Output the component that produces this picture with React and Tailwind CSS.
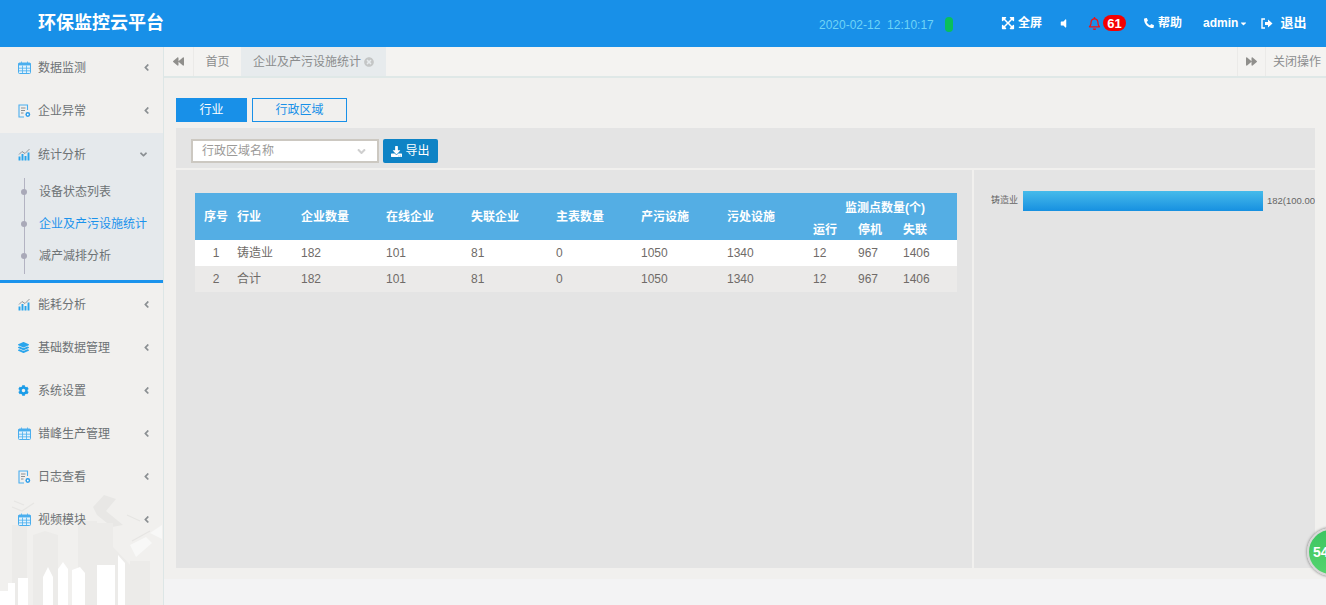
import React from 'react';
import {
  FaAngleLeft, FaAngleDown, FaBackward, FaForward, FaTimesCircle, FaExpandArrowsAlt,
  FaVolumeOff, FaRegBell, FaPhoneAlt, FaCaretDown, FaDownload, FaLayerGroup, FaCog,
} from 'react-icons/fa';

const font = { fontFamily: '"Liberation Sans", "Noto Sans CJK SC", sans-serif' };

const CalendarIcon = () => (
  <svg width="13" height="13" viewBox="0 0 13 13" fill="none">
    <rect x="0.5" y="2" width="12" height="10.5" rx="1" fill="#e3f2fc" stroke="#4aaeee" />
    <rect x="0.5" y="2" width="12" height="2.4" fill="#4aaeee" />
    <path d="M3.5 0.5V3M9.5 0.5V3M0.5 7.2H12.5M0.5 9.8H12.5M4.5 4.6V12.5M8.5 4.6V12.5" stroke="#4aaeee" strokeWidth="0.8" />
  </svg>
);

const FileIcon = () => (
  <svg width="13" height="14" viewBox="0 0 13 14" fill="none">
    <path d="M9.5 6V1H1V13H6" stroke="#4aaeee" strokeWidth="1.1" />
    <path d="M3 4H7.5M3 6.5H7M3 9H5.5" stroke="#8a8f92" strokeWidth="1" />
    <circle cx="9.8" cy="10.5" r="2.4" fill="#2a9be8" />
    <circle cx="9.8" cy="10.5" r="0.9" fill="#fff" />
  </svg>
);

const ChartIcon = () => (
  <svg width="13" height="13" viewBox="0 0 13 13" fill="none">
    <path d="M1 6.5L4 3.5L7 5.5L11.5 1" stroke="#8a8f92" strokeWidth="0.9" />
    <path d="M1.5 12.5V8.5M4.5 12.5V6M7.5 12.5V8M10.5 12.5V4.5" stroke="#2aa5ec" strokeWidth="1.9" />
  </svg>
);

const LayersIcon = () => <FaLayerGroup size={11} color="#2aa5ec" />;
const GearIcon = () => <FaCog size={11} color="#1b9ce8" />;

const ExitIcon = () => (
  <svg width="12" height="11" viewBox="0 0 12 11" fill="none">
    <path d="M4 1H1V10H4" stroke="#fff" strokeWidth="1.4" />
    <path d="M4 4H7V1.5L11.5 5.5L7 9.5V7H4Z" fill="#fff" />
  </svg>
);

const MenuItem = ({ icon, label, open }) => (
  <div className="flex items-center h-[43px] pl-[18px] pr-[11px] text-[12px] text-[#6d7275]">
    <span className="w-[20px] flex items-center shrink-0">{icon}</span>
    <span className="flex-1">{label}</span>
    {open ? <FaAngleDown size={11} color="#8a8f92" className="-ml-[3px] mr-[3px]" /> : <FaAngleLeft size={11} color="#8a8f92" />}
  </div>
);

const SubItem = ({ label, active }) => (
  <div className={`relative flex items-center h-[32px] pl-[39px] text-[12px] ${active ? 'text-[#1b93ec]' : 'text-[#6d7275]'}`}>
    <span className="absolute left-[21px] top-[13px] w-[6px] h-[6px] rounded-full bg-[#a9a9b8]" />
    {label}
  </div>
);

// skyline behind the lower menu entries
const CityBackground = () => (
  <svg className="absolute left-0 bottom-0" width="163" height="110" viewBox="0 0 163 110">
    <path d="M12 110V30H27V110ZM33 110V40L45 36L58 40V110ZM78 110V26H97V110Z" fill="#ecebe9" />
    <path d="M93 12L104 0L116 4L106 16L123 30L112 32L97 20Z" fill="#e8e7e5" />
    <path d="M97 28H113V110H97ZM113 52L132 72V110H113ZM130 66H150V110H130Z" fill="#ecebe9" />
    <path d="M12 12L22 16L34 8M14 6L24 10M127 20L140 26M132 46L150 36" stroke="#e6e5e3" strokeWidth="1.2" fill="none" />
    <path d="M130 50L146 42L152 48L136 62ZM150 38L162 30V44Z" fill="#f8f8f7" />
    <path d="M0 110V96H8V88H15V110ZM18 110V83H28V110ZM43 110V82L48 72L53 82V110ZM58 110V74L63 67L68 74V110ZM72 110V75L80 72L85 78V110ZM97 110V70H115V110ZM118 110V60L125 68V110Z" fill="#ffffff" />
  </svg>
);

const Sidebar = () => (
  <aside className="relative w-[164px] h-full bg-[#f1f0ee] border-r border-[#dde6e6] shrink-0 overflow-hidden">
    <CityBackground />
    <div className="relative -mt-px">
      <MenuItem icon={<CalendarIcon />} label="数据监测" />
      <MenuItem icon={<FileIcon />} label="企业异常" />
      <div className="mt-px bg-[#e5e9ec] border-b-[3px] border-[#1b93ec] pb-[8px]">
        <MenuItem icon={<ChartIcon />} label="统计分析" open />
        <div className="relative">
          <span className="absolute left-[23.5px] top-[2px] -bottom-[2px] w-px bg-[#b3b3c2]" />
          <SubItem label="设备状态列表" />
          <SubItem label="企业及产污设施统计" active />
          <SubItem label="减产减排分析" />
        </div>
      </div>
      <MenuItem icon={<ChartIcon />} label="能耗分析" />
      <MenuItem icon={<LayersIcon />} label="基础数据管理" />
      <MenuItem icon={<GearIcon />} label="系统设置" />
      <MenuItem icon={<CalendarIcon />} label="错峰生产管理" />
      <MenuItem icon={<FileIcon />} label="日志查看" />
      <MenuItem icon={<CalendarIcon />} label="视频模块" />
    </div>
  </aside>
);

const Header = () => (
  <header className="h-[47px] bg-[#1890e8] flex items-center text-white shrink-0">
    <div className="w-[819px] pl-[38px] text-[18px] font-bold">环保监控云平台</div>
    <span className="text-[12px] text-[#6fd4f7] w-[126px] pt-[2px] whitespace-pre">2020-02-12  12:10:17</span>
    <span className="w-[8px] h-[15px] mt-[2px] rounded-full bg-[#0abf5b]" />
    <div className="flex items-center h-full ml-[48px] pb-[1px] text-[12px] font-bold">
      <FaExpandArrowsAlt size={14} />
      <span className="ml-[3px]">全屏</span>
      <FaVolumeOff size={11} className="ml-[16px]" />
      <FaRegBell size={13} color="#f50f0f" className="ml-[19px]" />
      <span className="ml-[2px] w-[23px] h-[16px] rounded-full bg-[#f50000] flex items-center justify-center text-[13px] leading-none">61</span>
      <FaPhoneAlt size={10} className="ml-[18px]" />
      <span className="ml-[4px]">帮助</span>
      <span className="ml-[21px]">admin</span>
      <FaCaretDown size={9} className="ml-[1px]" />
      <span className="ml-[13px] flex"><ExitIcon /></span>
      <span className="ml-[7px] text-[13px]">退出</span>
    </div>
  </header>
);

const TabBar = () => (
  <div className="h-[31px] flex bg-[#f4f3f1] border-b-2 border-[#dfe8e7] text-[12px] text-[#8b8d8e] shrink-0">
    <button className="w-[30px] border-r border-[#ebeae8] flex items-center justify-center text-[#908f8c]"><FaBackward size={11} /></button>
    <div className="w-[47px] flex items-center justify-center">首页</div>
    <div className="w-[145px] bg-[#e7ebed] flex items-center pl-[12px]">
      企业及产污设施统计
      <FaTimesCircle size={10} color="#c4c6c6" className="ml-[3px]" />
    </div>
    <div className="flex-1" />
    <button className="w-[29px] border-x border-[#ebeae8] flex items-center justify-center text-[#908f8c]"><FaForward size={11} /></button>
    <div className="w-[60px] flex items-center pl-[7px] whitespace-nowrap">关闭操作</div>
  </div>
);

const rows = [
  ['1', '铸造业'],
  ['2', '合计'],
];

const StatsTable = () => (
  <table className="w-[762px] table-fixed border-collapse text-[12px]">
    <colgroup>
      <col className="w-[37px]" />
      <col className="w-[64px]" />
      <col className="w-[85px]" />
      <col className="w-[85px]" />
      <col className="w-[85px]" />
      <col className="w-[85px]" />
      <col className="w-[86px]" />
      <col className="w-[86px]" />
      <col className="w-[45px]" />
      <col className="w-[45px]" />
      <col className="w-[59px]" />
    </colgroup>
    <thead className="bg-[#54aee4] text-white font-bold">
      <tr className="h-[27px]">
        <th rowSpan={2} className="text-center pl-[5px] font-bold">序号</th>
        {['行业', '企业数量', '在线企业', '失联企业', '主表数量', '产污设施', '污处设施'].map((h) => (
          <th key={h} rowSpan={2} className="text-left pl-[5px] font-bold">{h}</th>
        ))}
        <th colSpan={3} className="pl-[37px] pt-[2px] text-left font-bold">监测点数量(个)</th>
      </tr>
      <tr className="h-[20px]">
        {['运行', '停机', '失联'].map((h) => (
          <th key={h} className="text-left pl-[5px] font-bold">{h}</th>
        ))}
      </tr>
    </thead>
    <tbody className="text-[#6f6b68]">
      {rows.map(([no, name], i) => (
        <tr key={no} className={`h-[26px] ${i === 0 ? 'bg-white' : 'bg-[#ebeae9]'}`}>
          <td className="text-center pl-[5px]">{no}</td>
          {[name, '182', '101', '81', '0', '1050', '1340', '12', '967', '1406'].map((v, j) => (
            <td key={j} className="pl-[5px]">{v}</td>
          ))}
        </tr>
      ))}
    </tbody>
  </table>
);

const ChartPanel = () => (
  <div className="flex-1 min-w-0 bg-[#e4e4e4] pt-[21px] overflow-hidden">
    <div className="flex items-center h-[20px] whitespace-nowrap text-[#666]">
      <span className="ml-[17px] w-[33px] text-[9px]">铸造业</span>
      <div className="w-[240px] h-[20px] ml-px shrink-0 bg-gradient-to-b from-[#45bbea] to-[#1590e0]" />
      <span className="ml-[4px] text-[9.5px]">182(100.00</span>
    </div>
  </div>
);

const Content = () => (
  <main className="flex-1 min-h-0 bg-[#f1f0ee] pl-[12px] pr-[11px] pt-[20px]">
    <div className="flex gap-[5px] text-[12px]">
      <button className="w-[71px] h-[24px] bg-[#1890e8] text-white">行业</button>
      <button className="w-[95px] h-[24px] border border-[#1890e8] text-[#1890e8]">行政区域</button>
    </div>
    <div className="mt-[6px] h-[440px] flex flex-col">
      <div className="h-[40px] bg-[#e4e4e4] flex items-start pl-[15px] gap-[4px] pt-[11px] shrink-0">
        <div className="w-[188px] h-[24px] bg-white border-2 border-[#ccc8c1] flex items-center justify-between px-[9px] text-[12px] text-[#9b9a98]">
          行政区域名称
          <FaAngleDown size={13} color="#cfcfcf" />
        </div>
        <button className="w-[55px] h-[24px] bg-[#0e83c5] rounded-[2px] text-white text-[12px] flex items-center justify-center gap-[3px]">
          <FaDownload size={11} />导出
        </button>
      </div>
      <div className="flex flex-1 min-h-0 mt-[2px] gap-[2px]">
        <div className="w-[796px] shrink-0 bg-[#e4e4e4] pl-[19px] pt-[23px]">
          <StatsTable />
        </div>
        <ChartPanel />
      </div>
    </div>
  </main>
);

export default function App() {
  return (
    <div className="relative w-[1326px] h-[605px] overflow-hidden bg-[#f3f3f4] flex flex-col" style={font}>
      <Header />
      <div className="flex flex-1 min-h-0">
        <Sidebar />
        <div className="flex-1 min-w-0 flex flex-col">
          <TabBar />
          <Content />
          <div className="h-[26px] bg-[#f3f3f4] shrink-0" />
        </div>
      </div>
      <div className="absolute left-[1307px] top-[528px] w-[48px] h-[48px] rounded-full bg-gradient-to-b from-[#3cc561] to-[#55d46e] border-[2px] border-[#d8d8d8] shadow-[0_0_3px_#666] flex items-center pl-[4px] text-white font-bold text-[14px]">
        <span className="whitespace-nowrap">54</span>
      </div>
    </div>
  );
}
